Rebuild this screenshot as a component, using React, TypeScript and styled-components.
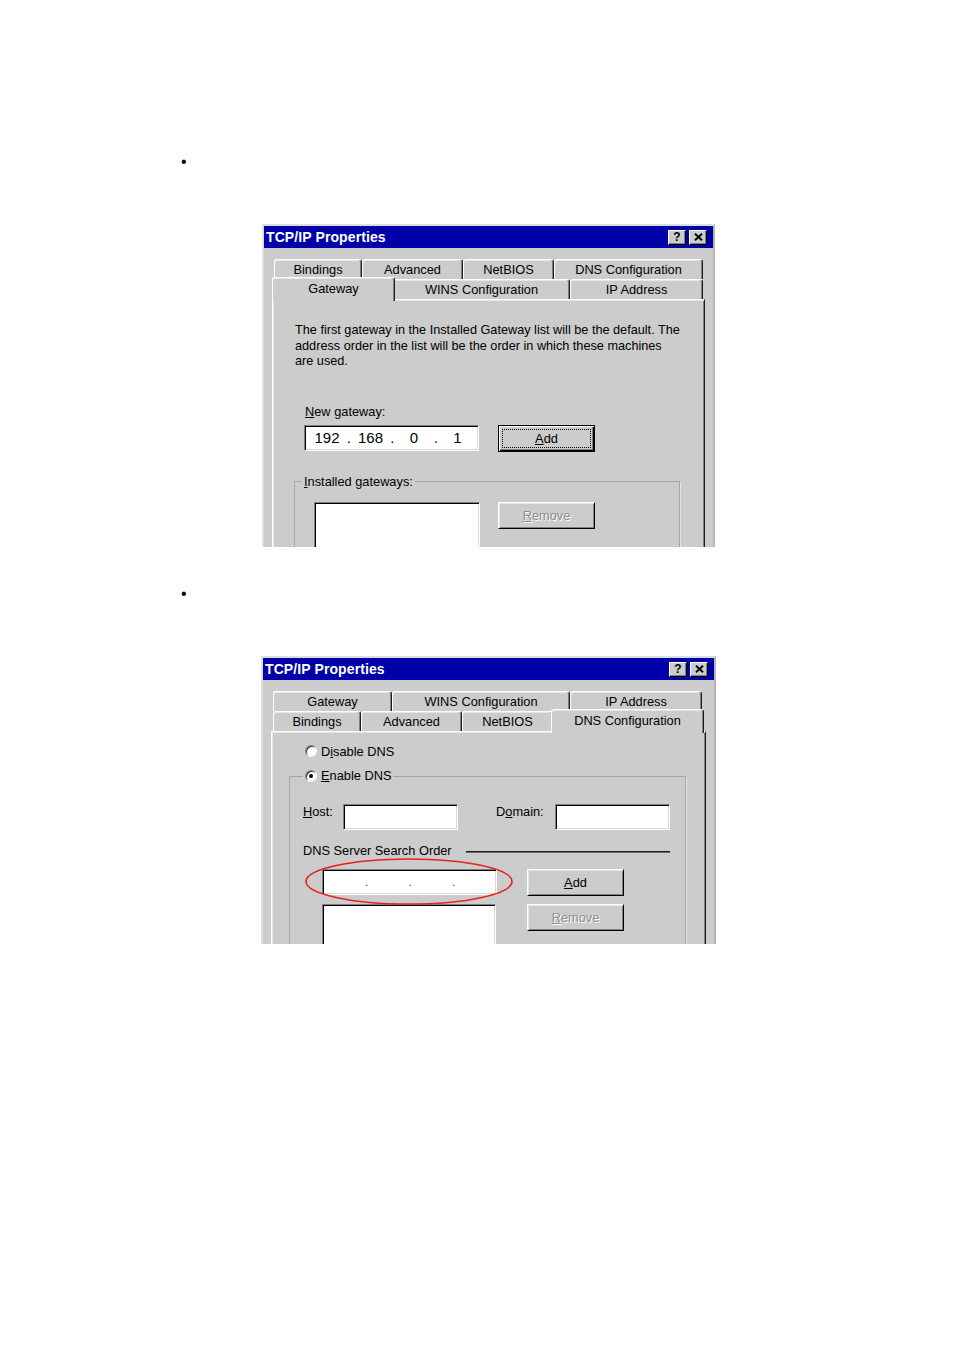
import React from 'react';
import styled, { createGlobalStyle } from 'styled-components';

const GlobalStyle = createGlobalStyle`
  html, body {
    margin: 0;
    padding: 0;
    background: #fff;
  }
  body {
    font-family: 'Liberation Sans', Arial, sans-serif;
  }
`;

const Page = styled.div`
  width: 954px;
  min-height: 1351px;
  box-sizing: border-box;
  padding-top: 150px;
  background: #fff;
`;

const Bullet = styled.div<{ $top: number }>`
  margin: ${p => p.$top}px 0 0 181px;
  height: 24px;
  line-height: 24px;
  font-size: 16px;
  color: #000;
`;

const Window = styled.div<{ $left: number; $width: number; $height: number }>`
  box-sizing: border-box;
  margin: 50px 0 0 ${p => p.$left}px;
  width: ${p => p.$width}px;
  height: ${p => p.$height}px;
  overflow: hidden;
  display: flex;
  flex-direction: column;
  background: #cccccc;
  border-top: 2px solid #dedede;
  border-left: 2px solid #dedede;
  border-right: 2px solid #b4b4b4;
  font-size: 12.8px;
  color: #000;
`;

const TitleBar = styled.div`
  flex: none;
  height: 22px;
  display: flex;
  align-items: center;
  justify-content: space-between;
  padding: 0 6px 0 2px;
  background: #0000a8;
`;

const TitleText = styled.span`
  color: #fff;
  font-weight: 700;
  font-size: 14px;
  letter-spacing: 0.1px;
`;

const CaptionButtons = styled.div`
  display: flex;
  gap: 3px;
`;

const CaptionButton = styled.span`
  box-sizing: border-box;
  width: 18px;
  height: 15px;
  display: flex;
  align-items: center;
  justify-content: center;
  background: #cccccc;
  border: 1px solid;
  border-color: #fff #000 #000 #fff;
  box-shadow: inset -1px -1px #808080;
  font-weight: 700;
  font-size: 12px;
  line-height: 1;
`;

const Body = styled.div`
  flex: 1;
  padding: 11px 8px 0;
`;

const TabRow = styled.div`
  display: flex;
  height: 20px;
  margin-left: 2px;
`;

const Tab = styled.div<{ $w: number; $active?: boolean }>`
  position: relative;
  z-index: ${p => (p.$active ? 2 : 1)};
  box-sizing: border-box;
  flex: none;
  width: ${p => (p.$active ? p.$w + 4 : p.$w)}px;
  height: ${p => (p.$active ? 24 : 20)}px;
  margin: ${p => (p.$active ? '-2px -2px 0' : '0')};
  padding-bottom: ${p => (p.$active ? 2 : 0)}px;
  display: flex;
  align-items: center;
  justify-content: center;
  background: #cccccc;
  border-top: 1px solid #fff;
  border-left: 1px solid #fff;
  border-right: 1px solid #1c1c1c;
  border-radius: 3px 3px 0 0;
  box-shadow: inset -1px 0 #808080, inset 0 1px #e6e6e6;
  white-space: nowrap;
`;

const Panel = styled.div`
  box-sizing: border-box;
  height: 420px;
  background: #cccccc;
  border-top: 1px solid #fff;
  border-left: 1px solid #fff;
  border-right: 1px solid #1c1c1c;
  box-shadow: inset 1px 1px #e6e6e6, inset -1px 0 #808080;
`;

const Note = styled.p`
  margin: 0;
  padding: 23px 0 0 22px;
  font-size: 12.7px;
  line-height: 15.5px;
`;

const FieldLabel = styled.div<{ $mt: number; $ml: number }>`
  margin: ${p => p.$mt}px 0 0 ${p => p.$ml}px;
  height: 16px;
  line-height: 16px;
`;

const Key = styled.span`
  text-decoration: underline;
`;

const FieldRow = styled.div`
  display: flex;
  align-items: flex-start;
  gap: 19px;
  margin: 5px 0 0 31px;
`;

const Field = styled.div<{ $w: number; $h?: number }>`
  box-sizing: border-box;
  flex: none;
  width: ${p => p.$w}px;
  height: ${p => p.$h ?? 26}px;
  display: flex;
  align-items: center;
  background: #fff;
  border: 1px solid;
  border-color: #808080 #fff #fff #808080;
  box-shadow: inset 1px 1px #000, inset -1px -1px #d8d8d8;
`;

const IpWrap = styled.div`
  display: flex;
  align-items: center;
  padding-left: 5px;
  font-size: 15px;
`;

const Octet = styled.span`
  width: 34px;
  text-align: center;
`;

const Dot = styled.span<{ $faint?: boolean }>`
  width: 9.5px;
  text-align: center;
  color: ${p => (p.$faint ? '#555' : '#000')};
  font-size: ${p => (p.$faint ? 12 : 15)}px;
`;

const Button = styled.button<{ $isDefault?: boolean; $off?: boolean }>`
  box-sizing: border-box;
  flex: none;
  width: 97px;
  height: 27px;
  margin: 0;
  padding: 3px;
  display: flex;
  background: #cccccc;
  border: 1px solid;
  border-color: ${p => (p.$isDefault ? '#000' : '#fff #000 #000 #fff')};
  box-shadow: ${p =>
    p.$isDefault
      ? 'inset 1px 1px #fff, inset -1px -1px #000, inset -2px -2px #808080'
      : 'inset 1px 1px #e6e6e6, inset -1px -1px #808080'};
  font-family: inherit;
  font-size: 12.8px;
  color: ${p => (p.$off ? '#8e8e8e' : '#000')};
  text-shadow: ${p => (p.$off ? '1px 1px 0 #fff' : 'none')};
`;

const ButtonFace = styled.span<{ $focus?: boolean }>`
  flex: 1;
  display: flex;
  align-items: center;
  justify-content: center;
  border: 1px dotted ${p => (p.$focus ? '#000' : 'transparent')};
`;

const Group = styled.fieldset<{ $mt: number; $ml: number; $w: number }>`
  box-sizing: border-box;
  margin: ${p => p.$mt}px 0 0 ${p => p.$ml}px;
  width: ${p => p.$w}px;
  min-width: 0;
  height: 260px;
  padding: 0;
  border: 1px solid #a6a6a6;
  box-shadow: 1px 1px 0 #e4e4e4;
`;

const Legend = styled.legend<{ $ml: number }>`
  margin-left: ${p => p.$ml}px;
  padding: 0 2px;
  height: 16px;
  line-height: 16px;
  background: #cccccc;
`;

const GatewayList = styled.div`
  display: flex;
  align-items: flex-start;
  gap: 18px;
  padding: 12px 0 0 19px;
`;

const RadioRow = styled.label<{ $mt?: number; $ml?: number }>`
  display: flex;
  align-items: center;
  gap: 4px;
  height: 16px;
  margin: ${p => p.$mt ?? 0}px 0 0 ${p => p.$ml ?? 0}px;
`;

const RadioMark = styled.span<{ $checked?: boolean }>`
  box-sizing: border-box;
  width: 12px;
  height: 12px;
  display: flex;
  align-items: center;
  justify-content: center;
  border-radius: 50%;
  background: #fff;
  border: 1px solid;
  border-color: #808080 #f4f4f4 #f4f4f4 #808080;
  box-shadow: inset 1px 1px #303030;

  &::after {
    content: '';
    width: 4px;
    height: 4px;
    border-radius: 50%;
    background: ${p => (p.$checked ? '#000' : 'transparent')};
  }
`;

const DnsBody = styled.div`
  display: flex;
  flex-direction: column;
  padding: 20px 0 0 13px;
`;

const HostRow = styled.div`
  display: flex;
  align-items: flex-start;
  height: 26px;
`;

const InlineLabel = styled.span<{ $w: number; $ml?: number }>`
  flex: none;
  width: ${p => p.$w}px;
  margin-left: ${p => p.$ml ?? 0}px;
  line-height: 16px;
`;

const SectionRow = styled.div`
  display: flex;
  align-items: center;
  width: 367px;
  height: 16px;
  margin-top: 12px;
`;

const Rule = styled.div`
  flex: 1;
  margin-left: 14px;
  margin-top: 3px;
  height: 1px;
  background: #1e1e1e;
  border-bottom: 1px solid #6a6a6a;
`;

const ServerGrid = styled.div`
  display: grid;
  grid-template-columns: 175px 97px;
  column-gap: 30px;
  row-gap: 8px;
  align-items: start;
  margin: 11px 0 0 19px;
`;

const Marked = styled.div`
  position: relative;
  width: 175px;
  height: 26px;
`;

const Ring = styled.svg`
  position: absolute;
  left: -17px;
  top: -11px;
  overflow: visible;
  pointer-events: none;
`;

type TabSpec = { label: string; w: number; active?: boolean };

function CloseGlyph() {
  return (
    <svg width="9" height="8" viewBox="0 0 9 8">
      <path d="M1 0.8 L8 7.2 M8 0.8 L1 7.2" stroke="#000" strokeWidth="1.9" />
    </svg>
  );
}

function IpAddress({ parts, faint }: { parts: string[]; faint?: boolean }) {
  return (
    <IpWrap>
      {parts.map((part, i) => (
        <React.Fragment key={i}>
          {i > 0 && <Dot $faint={faint}>.</Dot>}
          <Octet>{part}</Octet>
        </React.Fragment>
      ))}
    </IpWrap>
  );
}

function PropertiesWindow({
  left,
  width,
  height,
  rows,
  children,
}: {
  left: number;
  width: number;
  height: number;
  rows: TabSpec[][];
  children: React.ReactNode;
}) {
  return (
    <Window $left={left} $width={width} $height={height}>
      <TitleBar>
        <TitleText>TCP/IP Properties</TitleText>
        <CaptionButtons>
          <CaptionButton>?</CaptionButton>
          <CaptionButton>
            <CloseGlyph />
          </CaptionButton>
        </CaptionButtons>
      </TitleBar>
      <Body>
        {rows.map((row, r) => (
          <TabRow key={r}>
            {row.map(tab => (
              <Tab key={tab.label} $w={tab.w} $active={tab.active}>
                {tab.label}
              </Tab>
            ))}
          </TabRow>
        ))}
        <Panel>{children}</Panel>
      </Body>
    </Window>
  );
}

const gatewayTabs: TabSpec[][] = [
  [
    { label: 'Bindings', w: 88 },
    { label: 'Advanced', w: 101 },
    { label: 'NetBIOS', w: 91 },
    { label: 'DNS Configuration', w: 149 },
  ],
  [
    { label: 'Gateway', w: 119, active: true },
    { label: 'WINS Configuration', w: 177 },
    { label: 'IP Address', w: 133 },
  ],
];

const dnsTabs: TabSpec[][] = [
  [
    { label: 'Gateway', w: 119 },
    { label: 'WINS Configuration', w: 178 },
    { label: 'IP Address', w: 132 },
  ],
  [
    { label: 'Bindings', w: 88 },
    { label: 'Advanced', w: 101 },
    { label: 'NetBIOS', w: 91 },
    { label: 'DNS Configuration', w: 149, active: true },
  ],
];

export default function App() {
  return (
    <>
      <GlobalStyle />
      <Page>
        <Bullet $top={0}>•</Bullet>
        <PropertiesWindow left={262} width={453} height={323} rows={gatewayTabs}>
          <Note>
            The first gateway in the Installed Gateway list will be the default. The
            <br />
            address order in the list will be the order in which these machines
            <br />
            are used.
          </Note>
          <FieldLabel $mt={34} $ml={32}>
            <Key>N</Key>ew gateway:
          </FieldLabel>
          <FieldRow>
            <Field $w={175}>
              <IpAddress parts={['192', '168', '0', '1']} />
            </Field>
            <Button $isDefault>
              <ButtonFace $focus>
                <Key>A</Key>dd
              </ButtonFace>
            </Button>
          </FieldRow>
          <Group $mt={22} $ml={21} $w={386}>
            <Legend $ml={7}>
              <Key>I</Key>nstalled gateways:
            </Legend>
            <GatewayList>
              <Field $w={166} $h={90} />
              <Button $off>
                <ButtonFace>
                  <Key>R</Key>emove
                </ButtonFace>
              </Button>
            </GatewayList>
          </Group>
        </PropertiesWindow>

        <Bullet $top={35}>•</Bullet>
        <PropertiesWindow left={261} width={455} height={288} rows={dnsTabs}>
          <RadioRow $mt={11} $ml={33}>
            <RadioMark />
            <span>
              D<Key>i</Key>sable DNS
            </span>
          </RadioRow>
          <Group $mt={9} $ml={17} $w={397}>
            <Legend $ml={13}>
              <RadioRow>
                <RadioMark $checked />
                <span>
                  <Key>E</Key>nable DNS
                </span>
              </RadioRow>
            </Legend>
            <DnsBody>
              <HostRow>
                <InlineLabel $w={40}>
                  <Key>H</Key>ost:
                </InlineLabel>
                <Field $w={115} />
                <InlineLabel $w={59} $ml={38}>
                  D<Key>o</Key>main:
                </InlineLabel>
                <Field $w={115} />
              </HostRow>
              <SectionRow>
                <span>DNS Server Search Order</span>
                <Rule />
              </SectionRow>
              <ServerGrid>
                <Marked>
                  <Field $w={175}>
                    <IpAddress parts={['', '', '', '']} faint />
                  </Field>
                  <Ring width="208" height="47" viewBox="0 0 208 47">
                    <ellipse
                      cx="104"
                      cy="23.5"
                      rx="103"
                      ry="22.5"
                      fill="none"
                      stroke="#e3241f"
                      strokeWidth="1.6"
                    />
                  </Ring>
                </Marked>
                <Button>
                  <ButtonFace>
                    <Key>A</Key>dd
                  </ButtonFace>
                </Button>
                <Field $w={174} $h={80} />
                <Button $off>
                  <ButtonFace>
                    <Key>R</Key>emove
                  </ButtonFace>
                </Button>
              </ServerGrid>
            </DnsBody>
          </Group>
        </PropertiesWindow>
      </Page>
    </>
  );
}
